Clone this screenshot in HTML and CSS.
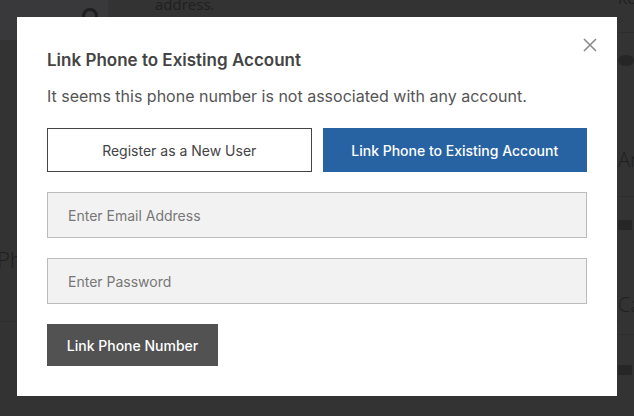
FILE: index.html
```html
<!DOCTYPE html>
<html lang="en">
<head>
  <meta charset="UTF-8" />
  <meta name="viewport" content="width=device-width, initial-scale=1" />
  <title>Link Phone to Existing Account</title>
  <link rel="stylesheet" href="styles.css">
</head>
<body>
  <!-- Page behind the dialog, dimmed -->
  <div class="page">
    <main class="page-main">
      <div class="page-top">
        <div class="page-tab">
          <span class="tab-icon"></span>
        </div>
        <p class="page-note">address.</p>
      </div>
      <div class="page-row">
        <span class="page-label">Ph</span>
      </div>
    </main>
    <aside class="page-side">
      <div class="side-row side-first"><span>Re</span></div>
      <div class="side-row side-chat">
        <span class="side-bubble"></span>
        <span class="side-text">An</span>
      </div>
      <div class="side-row side-files">
        <span class="side-folder"></span>
        <span class="side-text">Ca</span>
      </div>
      <div class="side-row side-last">
        <span class="side-folder"></span>
      </div>
    </aside>
  </div>

  <!-- Link phone dialog -->
  <div class="modal-backdrop">
    <div class="modal" role="dialog" aria-labelledby="modal-title">
      <button class="modal-close" aria-label="Close">
        <svg width="14" height="14" viewBox="0 0 14 14">
          <path d="M1 1 L13 13 M13 1 L1 13" stroke="#8a8a8a" stroke-width="1.6" fill="none"/>
        </svg>
      </button>

      <h2 id="modal-title" class="modal-title">Link Phone to Existing Account</h2>
      <p class="modal-text">It seems this phone number is not associated with any account.</p>

      <div class="choice-group">
        <button class="choice">Register as a New User</button>
        <button class="choice active">Link Phone to Existing Account</button>
      </div>

      <form class="link-form">
        <input type="email" class="field" placeholder="Enter Email Address" />
        <input type="password" class="field" placeholder="Enter Password" />
        <button type="button" class="submit-btn">Link Phone Number</button>
      </form>
    </div>
  </div>
</body>
</html>
```

FILE: styles.css
```css
/* Reset and base styles */
* {
  margin: 0;
  padding: 0;
  box-sizing: border-box;
}

html, body {
  height: 100%;
  overflow: hidden;
  font-family: Inter, "Noto Sans", sans-serif;
  background-color: #333;
}

/* Dimmed page behind the dialog */
.page {
  display: grid;
  grid-template-columns: 1fr 14px;
  height: 416px;
  color: #1f1f1f;
}

.page-main {
  display: flex;
  flex-direction: column;
}

.page-top {
  display: flex;
  height: 40px;
}

.page-tab {
  width: 108px;
  background: #39393b;
  display: flex;
  justify-content: flex-end;
  align-items: flex-start;
  padding: 8px 10px 0 0;
}

.tab-icon {
  width: 16px;
  height: 16px;
  border-radius: 50%;
  border: 3px solid #1e1e1e;
}

.page-note {
  font-size: 15px;
  padding-left: 47px;
  margin-top: -6px;
  font-family: "Open Sans", sans-serif;
}

.page-row {
  margin-top: 200px;
  height: 82px;
  border-bottom: 1px solid #2d2d2d;
  display: flex;
  align-items: flex-start;
  padding-top: 4px;
}

.page-label {
  font-family: "Open Sans", sans-serif;
  font-size: 22px;
  font-weight: 300;
  margin-left: -3px;
}

.page-side {
  display: flex;
  flex-direction: column;
  margin-left: -2px;
  font-family: "Open Sans", sans-serif;
}

.side-row {
  border-bottom: 1px solid #2d2d2d;
  display: flex;
  flex-direction: column;
}

.side-first {
  font-size: 15px;
  margin-top: -12px;
  height: 45px;
}

.side-chat {
  height: 164px;
  padding-top: 22px;
  gap: 84px;
}

.side-files {
  height: 138px;
  padding-top: 23px;
  gap: 65px;
}

.side-last {
  padding-top: 30px;
  border-bottom: none;
}

.side-text {
  font-size: 20px;
  font-weight: 300;
  line-height: 20px;
}

.side-bubble {
  width: 16px;
  height: 11px;
  border-radius: 50%;
  background: #262626;
}

.side-folder {
  width: 14px;
  height: 10px;
  border-radius: 1px;
  background: #262626;
}

/* Dialog */
.modal-backdrop {
  position: fixed;
  inset: 0;
  display: flex;
  justify-content: center;
  padding-top: 17px;
}

.modal {
  position: relative;
  width: 600px;
  height: 379px;
  background: #fff;
  padding: 30px;
}

.modal-close {
  position: absolute;
  top: 21px;
  right: 20px;
  background: none;
  border: none;
  cursor: pointer;
  width: 14px;
  height: 14px;
}

.modal-close svg {
  display: block;
}

.modal-title {
  font-size: 17px;
  font-weight: 600;
  line-height: 26px;
  color: #444;
}

.modal-text {
  margin-top: 11px;
  font-size: 16px;
  line-height: 24px;
  color: #555;
}

.choice-group {
  display: flex;
  gap: 11px;
  margin-top: 20px;
}

.choice {
  flex: 1;
  height: 44px;
  font-family: inherit;
  font-size: 14px;
  color: #444;
  background: #fff;
  border: 1px solid #444;
  cursor: pointer;
}

.choice.active {
  background: #2763a3;
  border-color: #2763a3;
  color: #fff;
  font-weight: 500;
}

.link-form {
  display: flex;
  flex-direction: column;
  align-items: flex-start;
  gap: 20px;
  margin-top: 20px;
}

.field {
  width: 100%;
  height: 46px;
  padding: 0 20px;
  font-family: inherit;
  font-size: 14px;
  color: #333;
  background: #f2f2f2;
  border: 1px solid #bbb;
  outline: none;
}

.field::placeholder {
  color: #777;
}

.submit-btn {
  width: 171px;
  height: 42px;
  font-family: inherit;
  font-size: 14px;
  font-weight: 500;
  color: #fff;
  background: #525252;
  border: none;
  cursor: pointer;
}
```
